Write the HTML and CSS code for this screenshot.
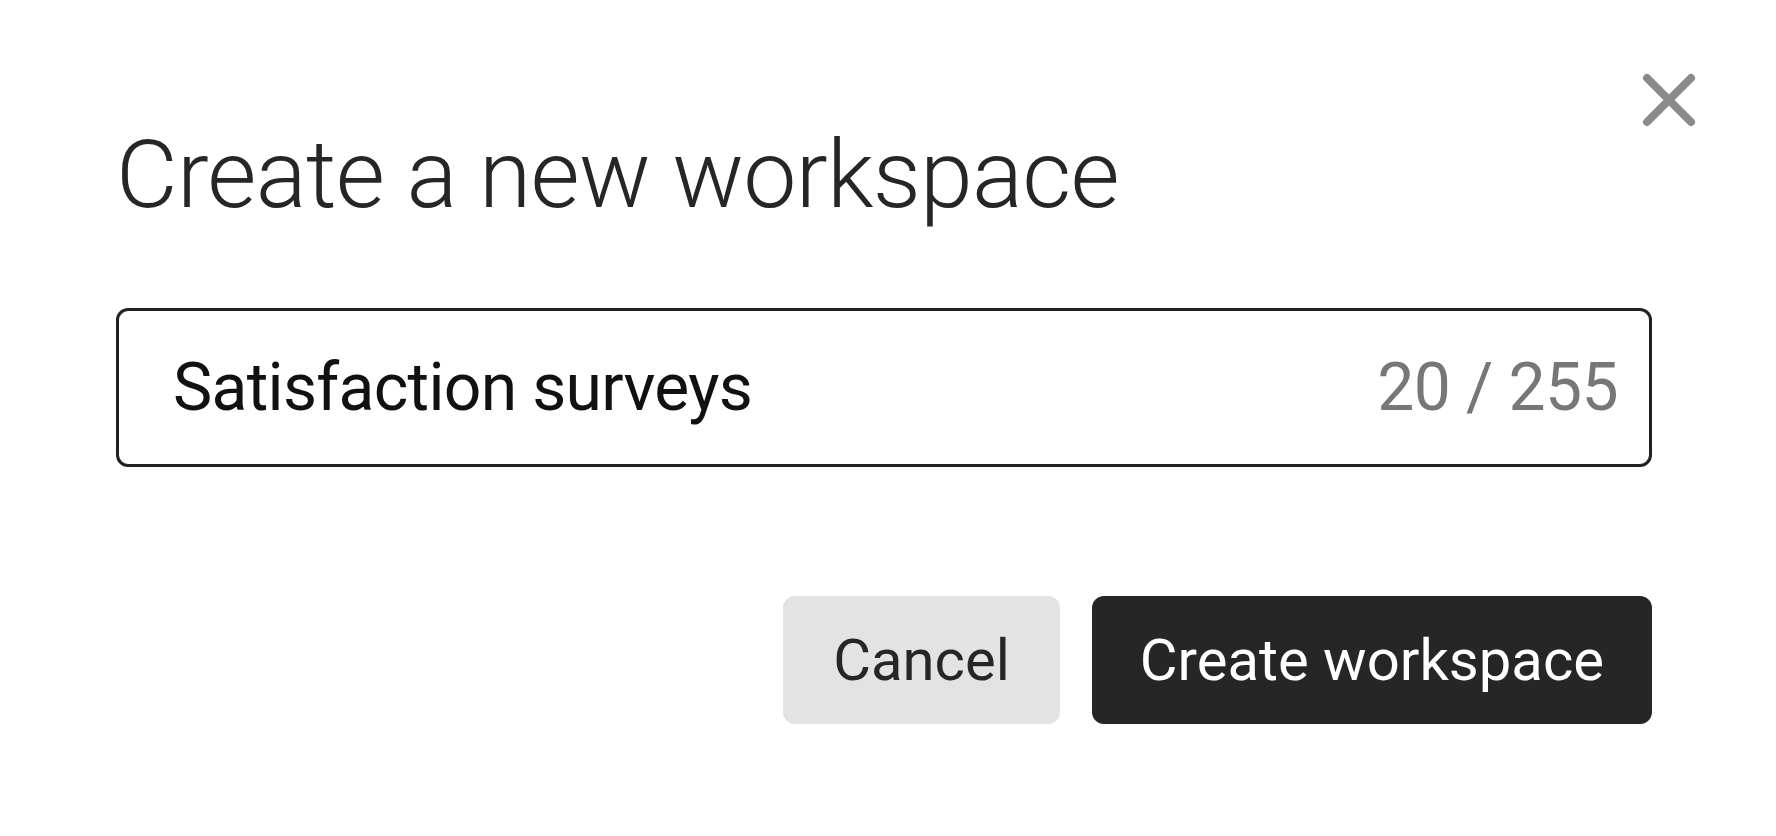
FILE: index.html
```html
<!DOCTYPE html>
<html lang="en">
<head>
<meta charset="utf-8">
<title>Create a new workspace</title>
<link rel="stylesheet" href="styles.css">
</head>
<body>
<div class="dialog">
  <button class="close" aria-label="Close">
    <svg width="60" height="60" viewBox="0 0 60 60"><path d="M8 8 L52 52 M52 8 L8 52" stroke="#8a8a8a" stroke-width="8" stroke-linecap="round" fill="none"/></svg>
  </button>
  <h1 class="title">Create a new workspace</h1>
  <div class="field">
    <span class="value">Satisfaction surveys</span>
    <span class="count">20 / 255</span>
  </div>
  <div class="actions">
    <button class="btn btn-secondary">Cancel</button>
    <button class="btn btn-primary">Create workspace</button>
  </div>
</div>
</body>
</html>
```

FILE: styles.css
```css
* { box-sizing: border-box; }
html, body { margin: 0; padding: 0; background: #ffffff; }
body { font-family: Roboto, Inter, "Liberation Sans", sans-serif; color: #262626; }
.dialog {
  position: relative;
  width: 1776px;
  height: 836px;
  padding: 127px 124px 0 116px;
  display: flex;
  flex-direction: column;
}
.close {
  position: absolute;
  left: 1639px;
  top: 70px;
  width: 60px;
  height: 60px;
  padding: 0;
  border: 0;
  background: transparent;
  display: block;
}
.close svg { display: block; }
.title {
  margin: 0;
  font-size: 95px;
  line-height: 96px;
  font-weight: 300;
  color: #262626;
  letter-spacing: -0.75px;
}
.field {
  margin-top: 85px;
  height: 159px;
  border: 3px solid #222222;
  border-radius: 12px;
  display: flex;
  align-items: center;
  justify-content: space-between;
  padding: 0 31px 0 54px;
}
.value { font-size: 66px; line-height: 67px; color: #111; font-weight: 400; letter-spacing: -0.7px; }
.count { font-size: 66px; line-height: 67px; color: #777777; font-weight: 400; letter-spacing: -0.6px; }
.actions {
  margin-top: 129px;
  display: flex;
  justify-content: flex-end;
  gap: 32px;
}
.btn {
  height: 128px;
  padding: 0 50px;
  border: 0;
  border-radius: 12px;
  font-family: inherit;
  font-size: 58px;
  line-height: 58px;
  font-weight: 400;
}
.btn-secondary { background: #e3e3e3; color: #262626; }
.btn-primary { background: #262626; color: #ffffff; padding: 0 48px; }
```
